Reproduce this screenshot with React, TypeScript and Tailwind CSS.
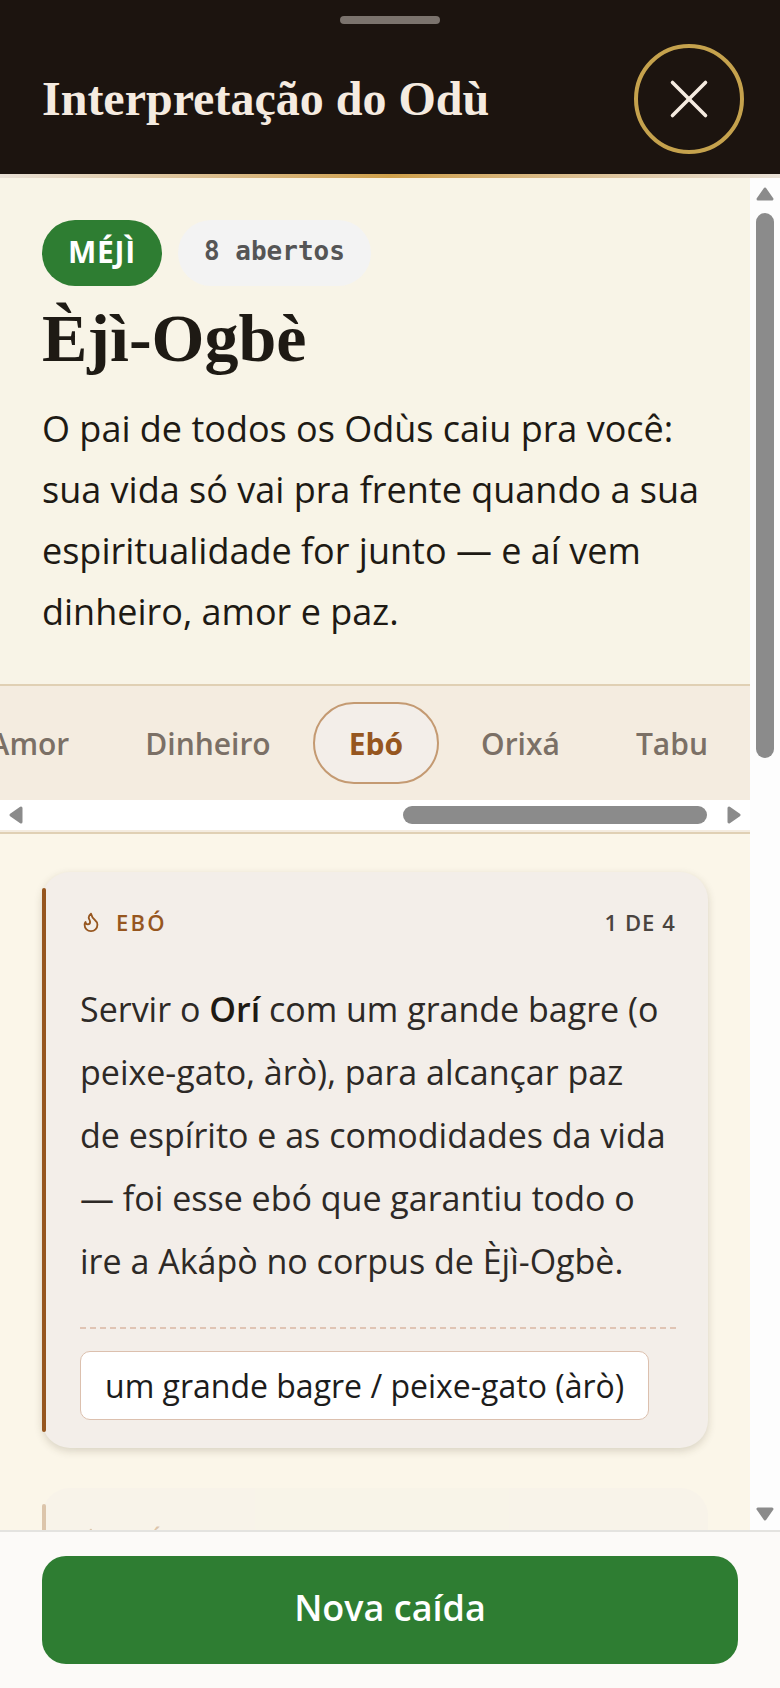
import { useState } from 'react';
import { Flame, X } from 'lucide-react';

const tabs = ['Amor', 'Dinheiro', 'Ebó', 'Orixá', 'Tabu'];

function Arrow({ className }: { className: string }) {
  return (
    <svg viewBox="0 0 18 14" className={className} fill="#8b8b8b" stroke="#8b8b8b" strokeWidth="3" strokeLinejoin="round">
      <path d="M9 2 L16 12 H2 Z" />
    </svg>
  );
}

function EboCard({ index, faded, children }: { index: number; faded?: boolean; children: React.ReactNode }) {
  return (
    <article
      className={
        faded
          ? 'flex shrink-0 rounded-[28px] bg-[#f3eee9] py-4 opacity-30'
          : 'flex shrink-0 rounded-[28px] bg-[#f3eee9] py-4 shadow-[0_3px_8px_rgba(60,50,20,0.18)]'
      }
    >
      <div className="w-1 shrink-0 rounded-full bg-[#96561f]"></div>
      <div className="min-w-0 flex-1 pt-5 pb-3 pl-[34px] pr-8">
        <div className="flex items-center justify-between text-[22px] leading-7 font-semibold">
          <h2 className="flex items-center gap-[14px] tracking-widest text-[#96561f]">
            <Flame size={22} strokeWidth={2} />
            EBÓ
          </h2>
          <span className="tracking-wider text-[#4a443f]">{index} DE 4</span>
        </div>
        {children}
      </div>
    </article>
  );
}

export default function App() {
  const [active, setActive] = useState('Ebó');

  return (
    <div className="flex h-screen flex-col overflow-hidden bg-[#fbf6e9] font-['Open_Sans',sans-serif] text-[#1e1a14]">
      {/* Header */}
      <header className="shrink-0 bg-[#1c140f]">
        <div className="flex justify-center pt-4">
          <div className="h-2 w-[100px] rounded bg-[#7b736d]"></div>
        </div>
        <div className="flex items-center justify-between pt-5 pb-5 pl-[42px] pr-9">
          <h1 className="font-['Liberation_Serif',serif] text-[48px] leading-[56px] font-bold text-[#f5ebe0]">
            Interpretação do Odù
          </h1>
          <button
            aria-label="Fechar"
            className="flex size-[110px] items-center justify-center rounded-full border-4 border-[#c5a24d] text-[#f5ebe0]"
          >
            <X size={66} strokeWidth={1.3} />
          </button>
        </div>
        <div className="h-1 bg-linear-to-r from-[#e8e0d6] via-[#cfa04a] to-[#e8e0d6]"></div>
      </header>

      <div className="flex min-h-0 flex-1">
        <main className="flex min-w-0 flex-1 flex-col overflow-hidden">
          {/* Odù */}
          <section className="shrink-0 bg-[#f8f4e7] px-[42px] pt-[42px] pb-[42px]">
            <div className="flex h-[66px] gap-4">
              <span className="flex min-w-[120px] items-center justify-center rounded-full bg-[#2e7d32] px-6 pb-1 text-[30px] font-bold tracking-wide text-white">
                MÉJÌ
              </span>
              <span className="flex items-center rounded-full bg-[#f3f3f3] px-[26px] pb-1 font-['DejaVu_Sans_Mono',monospace] text-[26px] font-bold text-[#555]">
                8 abertos
              </span>
            </div>
            <h2 className="mt-4 font-['Liberation_Serif',serif] text-[68px] leading-[72px] font-bold">Èjì-Ogbè</h2>
            <p className="mt-6 text-[36px] leading-[61px] font-medium">
              O pai de todos os Odùs caiu pra você: sua vida só vai pra frente quando a sua espiritualidade for junto — e aí vem dinheiro, amor e paz.
            </p>
          </section>

          {/* Tabs */}
          <nav className="shrink-0 border-y-2 border-[#e0d0b4]">
            <div className="flex h-[114px] items-center justify-end gap-2 overflow-hidden bg-[#f4ece0] pr-2">
              {tabs.map((tab) => (
                <button
                  key={tab}
                  onClick={() => setActive(tab)}
                  className={
                    tab === active
                      ? 'h-[82px] shrink-0 rounded-full border-2 border-[#c49a72] bg-[#f3eee9] px-[34px] text-[30px] font-bold text-[#96561f]'
                      : 'h-[82px] shrink-0 rounded-full border-2 border-transparent px-8 text-[30px] font-semibold text-[#7b7066]'
                  }
                >
                  {tab}
                </button>
              ))}
            </div>
            <div className="flex h-8 items-center border-b-2 border-[#f4ece0] bg-white px-[7px]">
              <Arrow className="h-[14px] w-[18px] -rotate-90" />
              <div className="flex flex-1 justify-end pr-[18px]">
                <div className="h-[18px] w-[304px] rounded-full bg-[#8b8b8b]"></div>
              </div>
              <Arrow className="h-[14px] w-[18px] rotate-90" />
            </div>
          </nav>

          {/* Cards */}
          <section className="flex min-h-0 flex-1 flex-col gap-10 px-[42px] pt-[38px]">
            <EboCard index={1}>
              <p className="mt-[42px] text-[34px] leading-[63px] text-[#2d2926]">
                Servir o <strong className="font-semibold text-[#1e1a14]">Orí</strong> com um grande bagre (o peixe-gato, àrò), para alcançar paz de&nbsp;espírito e as comodidades da vida — foi esse ebó que garantiu todo o ire a Akápò no corpus de Èjì-Ogbè.
              </p>
              <div className="mt-[34px] border-t-2 border-dashed border-[#e0c4b4] pt-[22px]">
                <span className="flex h-[69px] w-fit items-center rounded-[10px] border border-[#dcc0ae] bg-white px-6 text-[32px] font-medium text-[#1c1c1c]">
                  um grande bagre / peixe-gato (àrò)
                </span>
              </div>
            </EboCard>
            <EboCard index={2} faded>
              <div className="h-40"></div>
            </EboCard>
          </section>
        </main>

        {/* Scroll track */}
        <div className="flex w-[30px] shrink-0 flex-col items-center bg-[#fdfdfd] py-[9px]">
          <Arrow className="h-[14px] w-[18px]" />
          <div className="mt-3 h-[545px] w-[18px] rounded-full bg-[#8b8b8b]"></div>
          <Arrow className="mt-auto h-[14px] w-[18px] rotate-180" />
        </div>
      </div>

      {/* Footer */}
      <footer className="shrink-0 border-t-2 border-[#e4e3e0] bg-[#fcfaf8] px-[42px] py-6">
        <button className="h-[108px] w-full rounded-3xl bg-[#2e7d32] pb-1 text-[36px] font-semibold text-white">Nova caída</button>
      </footer>
    </div>
  );
}
